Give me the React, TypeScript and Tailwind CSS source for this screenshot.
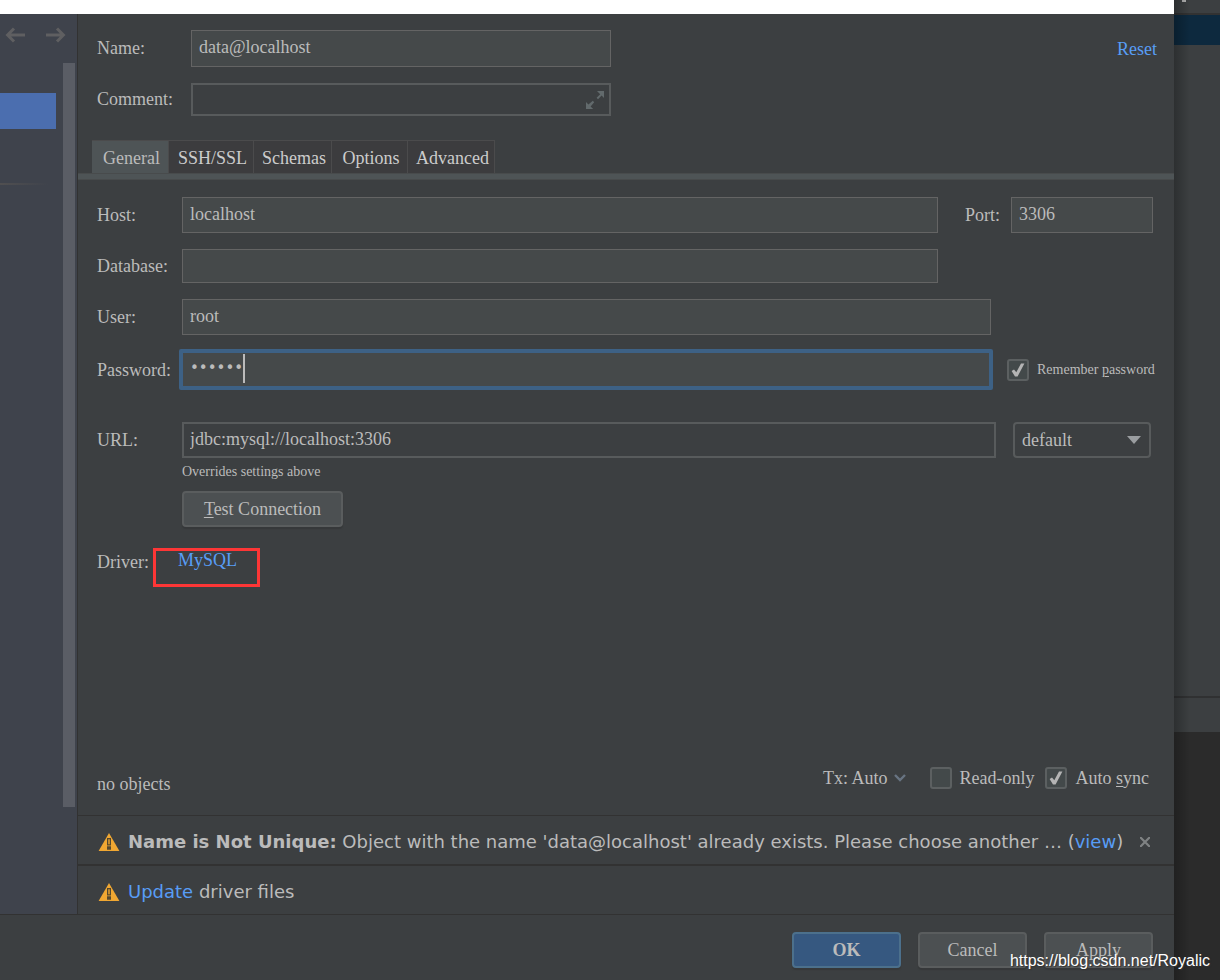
import { useState } from "react";
import type { ReactNode } from "react";

const inputClass =
  "border border-[#646464] bg-[#45494a] px-[7px] pb-[2px] text-[#bbbbbb] outline-none min-w-0";

const tabs = [
  { name: "General", width: "w-[77px]" },
  { name: "SSH/SSL", width: "w-[85px]" },
  { name: "Schemas", width: "w-[78px]" },
  { name: "Options", width: "w-[76px]" },
  { name: "Advanced", width: "w-[87px]" },
];

type CheckProps = {
  id: string;
  checked: boolean;
  onChange: (value: boolean) => void;
  children: ReactNode;
  className?: string;
};

const Check = ({ id, checked, onChange, children, className = "" }: CheckProps) => (
  <div className={`flex items-center gap-2 whitespace-nowrap ${className}`}>
    <span className="relative flex">
      <input
        id={id}
        type="checkbox"
        checked={checked}
        onChange={(e) => onChange(e.target.checked)}
        className="appearance-none w-[22px] h-[22px] rounded-[3px] border-2 border-[#5c6061] bg-[#43494a]"
      />
      {checked && (
        <svg viewBox="0 0 22 22" className="absolute inset-0 w-[22px] h-[22px] pointer-events-none">
          <path d="M4.6 12 7 10.6 9.3 13.2 14 4.4H17.4L10.6 17.4H8Z" fill="#b4b4b4" />
        </svg>
      )}
    </span>
    <label htmlFor={id}>{children}</label>
  </div>
);

const Warning = () => (
  <svg viewBox="0 0 22 20" className="w-[22px] h-5 shrink-0">
    <path d="M11 1 21.4 19H.6Z" fill="#f0a732" />
    <path fillRule="evenodd" d="M9 6h4v7.5H9zM10.3 7.3v4.9h1.4V7.3zM9 14.3h4v3.4H9z" fill="#55492f" />
  </svg>
);

const Sidebar = () => (
  <aside className="flex w-[78px] shrink-0 flex-col border-r border-[#323232] bg-[#3f434c]">
    <div className="flex h-[49px] items-start justify-between pt-[13px] pl-[5px] pr-[11px]">
      <button aria-label="Back">
        <svg viewBox="0 0 20 16" className="w-5 h-4" fill="none" stroke="#5f5f61" strokeWidth="3">
          <path d="M20 8H2.5M9 1.5 2.6 8 9 14.5" />
        </svg>
      </button>
      <button aria-label="Forward">
        <svg viewBox="0 0 20 16" className="w-5 h-4" fill="none" stroke="#5f5f61" strokeWidth="3">
          <path d="M0 8H17.5M11 1.5 17.4 8 11 14.5" />
        </svg>
      </button>
    </div>
    <div className="flex flex-1 pb-[107px] pr-[2px]">
      <div className="flex-1 pr-[7px] pt-[30px]">
        <div className="h-9 bg-[#4b6eaf]" />
        <div className="mt-[54px] mr-2 h-[2px] bg-linear-to-r from-[#504f50] to-[#3f434c]" />
      </div>
      <div className="w-3 bg-[#5a5d65]" />
    </div>
  </aside>
);

// Slice of the editor window that shows behind the dialog
const Backdrop = () => (
  <div className="relative flex w-[46px] shrink-0 flex-col bg-[#3c3f41]">
    <div className="h-[13px] pl-2">
      <div className="h-[2px] w-1 bg-[#b0b0b0]" />
    </div>
    <div className="h-[2px] bg-[#323232]" />
    <div className="h-[30px] bg-[#0d293e]" />
    <div className="flex-1" />
    <div className="h-[36px] border-t-2 border-[#303132]" />
    <div className="h-[248px] bg-[#2b2b2b]" />
    <div className="absolute inset-y-0 left-0 w-4 bg-linear-to-r from-black/25 to-transparent" />
  </div>
);

export default function App() {
  const [activeTab, setActiveTab] = useState("General");
  const [name, setName] = useState("data@localhost");
  const [comment, setComment] = useState("");
  const [host, setHost] = useState("localhost");
  const [port, setPort] = useState("3306");
  const [database, setDatabase] = useState("");
  const [user, setUser] = useState("root");
  const [password, setPassword] = useState("secret");
  const [url, setUrl] = useState("jdbc:mysql://localhost:3306");
  const [remember, setRemember] = useState(true);
  const [readOnly, setReadOnly] = useState(false);
  const [autoSync, setAutoSync] = useState(true);

  return (
    <div className="relative flex min-h-screen font-['Liberation_Serif',serif] text-[18px] leading-6 text-[#bbbbbb]">
      <div className="flex min-w-0 flex-1 flex-col bg-[#3c3f41]">
        <div className="h-[14px] bg-white" />

        <div className="flex flex-1">
          <Sidebar />

          <main className="flex min-w-0 flex-1 flex-col">
            {/* Name and comment */}
            <div className="flex items-start justify-between pl-[19px] pr-[17px] pt-4">
              <div>
                <div className="flex items-center">
                  <label htmlFor="name" className="w-[94px] pb-[2px]">Name:</label>
                  <input id="name" value={name} onChange={(e) => setName(e.target.value)} className={`${inputClass} h-[37px] w-[420px]`} />
                </div>
                <div className="relative mt-4 flex items-center">
                  <label htmlFor="comment" className="w-[94px] pb-[2px]">Comment:</label>
                  <input id="comment" value={comment} onChange={(e) => setComment(e.target.value)} className="h-[33px] w-[420px] border-2 border-[#585b5c] bg-transparent px-[7px] outline-none" />
                  <button aria-label="Expand" className="absolute right-[7px]">
                    <svg viewBox="0 0 18 18" className="w-[18px] h-[18px]" fill="#626a6c">
                      <path d="M11 0H18V7L15.6 4.6 12 8.2 10.6 6.8 14.2 3.2ZM0 11 2.4 13.4 6.8 9.8 8.2 11.2 4.6 15.4 7.2 18H0Z" />
                    </svg>
                  </button>
                </div>
              </div>
              <a href="#reset" className="mt-[7px] text-[#589df6]">Reset</a>
            </div>

            {/* Tabs */}
            <div role="tablist" className="mt-6 flex pl-[14px]">
              {tabs.map((tab) => (
                <button
                  key={tab.name}
                  role="tab"
                  aria-selected={activeTab === tab.name}
                  onClick={() => setActiveTab(tab.name)}
                  className={`h-[33px] border-t border-r border-[#4b4b4c] pl-[3px] pt-[2px] text-center ${tab.width} ${
                    activeTab === tab.name ? "bg-[#4e5456]" : "bg-[#3c3c3e] text-[#cccccc]"
                  }`}
                >
                  {tab.name}
                </button>
              ))}
            </div>
            <div className="h-[7px] border-y border-[#484b4c] bg-[#4e5456]" />

            {/* Connection settings */}
            <div className="flex flex-1 flex-col pl-[19px] pr-[21px] pt-[17px]">
              <div className="flex items-center">
                <label htmlFor="host" className="w-[85px]">Host:</label>
                <input id="host" value={host} onChange={(e) => setHost(e.target.value)} className={`${inputClass} h-9 flex-1`} />
                <label htmlFor="port" className="ml-[27px] w-[46px]">Port:</label>
                <input id="port" value={port} onChange={(e) => setPort(e.target.value)} className={`${inputClass} h-9 w-[142px]`} />
              </div>

              <div className="mt-4 mr-[215px] flex items-center">
                <label htmlFor="database" className="w-[85px]">Database:</label>
                <input id="database" value={database} onChange={(e) => setDatabase(e.target.value)} className={`${inputClass} h-[34px] flex-1`} />
              </div>

              <div className="mt-4 mr-[162px] flex items-center">
                <label htmlFor="user" className="w-[85px]">User:</label>
                <input id="user" value={user} onChange={(e) => setUser(e.target.value)} className={`${inputClass} h-9 flex-1`} />
              </div>

              <div className="-mr-2 mt-[14px] flex items-center">
                <label htmlFor="password" className="w-[82px]">Password:</label>
                <div className="relative flex flex-1">
                  <input
                    id="password"
                    type="password"
                    value={password}
                    onChange={(e) => setPassword(e.target.value)}
                    className="h-[41px] min-w-0 flex-1 rounded-[2px] border-4 border-[#3d6185] bg-[#45494a] px-[7px] pb-[4px] font-['DejaVu_Sans',sans-serif] text-[15px] outline-none"
                  />
                  <span className="absolute left-16 top-[5px] h-[29px] w-[2px] bg-[#bbbbbb]" />
                </div>
                <Check id="remember" checked={remember} onChange={setRemember} className="ml-[14px] w-[154px] text-[14px]">
                  Remember <u className="underline-offset-2">p</u>assword
                </Check>
              </div>

              <div className="mt-8 mr-[2px] flex items-center">
                <label htmlFor="url" className="w-[85px]">URL:</label>
                <input id="url" value={url} onChange={(e) => setUrl(e.target.value)} className="h-9 min-w-0 flex-1 border-2 border-[#585b5c] bg-transparent px-[6px] pb-[2px] outline-none" />
                <div className="relative ml-[17px] flex w-[138px] items-center">
                  <select aria-label="URL type" className="h-9 w-full appearance-none rounded-[4px] border-2 border-[#585b5c] bg-[#3c3f41] px-[7px] outline-none">
                    <option>default</option>
                  </select>
                  <svg viewBox="0 0 14 8" className="pointer-events-none absolute right-[10px] h-2 w-[14px]">
                    <path d="M0 0H14L7 8Z" fill="#9a9da0" />
                  </svg>
                </div>
              </div>

              <div className="ml-[85px] flex flex-col items-start">
                <p className="mt-1 text-[14px] leading-5">Overrides settings above</p>
                <button className="mt-[9px] h-9 w-[161px] rounded-[4px] border-2 border-[#5a5d5e] bg-[#4c5052] shadow-[0_2px_1px_#36383a]">
                  <u className="underline-offset-2">T</u>est Connection
                </button>
              </div>

              <div className="mt-[21px] flex items-start">
                <span className="mt-[2px] w-[56px]">Driver:</span>
                <a href="#mysql" className="h-[39px] w-[107px] border-[3px] border-[#fd3636] pl-[22px] leading-[18px] text-[#589df6]">MySQL</a>
              </div>

              <div className="mt-auto flex items-end justify-between pb-[19px]">
                <span>no objects</span>
                <div className="mr-1 flex items-center pb-[6px]">
                  <button className="flex items-center gap-[6px]">
                    Tx: Auto
                    <svg viewBox="0 0 12 8" className="h-2 w-3" fill="none" stroke="#687482" strokeWidth="2.4">
                      <path d="M1 1 6 6 11 1" />
                    </svg>
                  </button>
                  <Check id="readonly" checked={readOnly} onChange={setReadOnly} className="ml-6">
                    Read-only
                  </Check>
                  <Check id="autosync" checked={autoSync} onChange={setAutoSync} className="ml-[11px]">
                    Auto <u className="underline-offset-2">s</u>ync
                  </Check>
                </div>
              </div>
            </div>

            {/* Notifications */}
            <div className="font-['DejaVu_Sans',sans-serif]">
              <div className="flex h-[49px] items-center border-t border-[#323232] pl-5 pr-6 pt-[3px]">
                <Warning />
                <p className="ml-2 truncate">
                  <b>Name is Not Unique:</b> Object with the name 'data@localhost' already exists. Please choose another … (
                  <a href="#view" className="text-[#589df6]">view</a>)
                </p>
                <button aria-label="Dismiss" className="ml-auto">
                  <svg viewBox="0 0 10 10" className="w-[10px] h-[10px]" stroke="#7f8283" strokeWidth="2.2">
                    <path d="M0 0 10 10M10 0 0 10" />
                  </svg>
                </button>
              </div>
              <div className="flex h-[50px] items-center border-t-2 border-[#323232] pl-5 pt-[3px]">
                <Warning />
                <p className="ml-2">
                  <a href="#update" className="text-[#589df6]">Update</a> driver files
                </p>
              </div>
            </div>
          </main>
        </div>

        {/* Dialog buttons */}
        <footer className="flex h-[66px] items-start justify-end gap-[17px] border-t border-[#323232] pr-[21px] pt-[17px]">
          <button className="h-9 w-[109px] rounded-[4px] border-2 border-[#4c708c] bg-[#365880] font-bold shadow-[0_2px_1px_#36383a]">OK</button>
          <button className="h-9 w-[109px] rounded-[4px] border-2 border-[#5a5d5e] bg-[#4c5052] shadow-[0_2px_1px_#36383a]">Cancel</button>
          <button className="h-9 w-[109px] rounded-[4px] border-2 border-[#5a5d5e] bg-[#4c5052] shadow-[0_2px_1px_#36383a]">Apply</button>
        </footer>
      </div>

      <Backdrop />

      <div className="pointer-events-none absolute bottom-[7px] right-[10px] font-['Liberation_Sans',sans-serif] text-[16px] text-white [text-shadow:1px_1px_1px_#333]">
        https://blog.csdn.net/Royalic
      </div>
    </div>
  );
}
